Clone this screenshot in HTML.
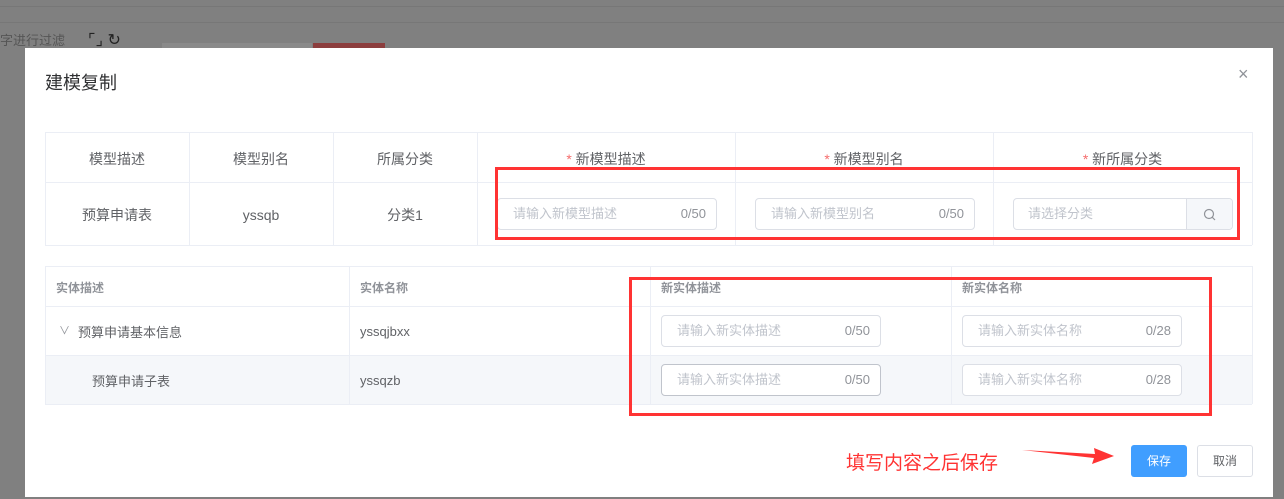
<!DOCTYPE html>
<html><head><meta charset="utf-8"><style>
*{box-sizing:border-box;margin:0;padding:0}
body{width:1284px;height:499px;background:#808080;font-family:"Liberation Sans","Noto Sans CJK SC",sans-serif;position:relative;overflow:hidden;color:#606266}
.a{position:absolute}
.modal{left:25px;top:48px;width:1248px;height:449px;background:#fff}
.ln{position:absolute;background:#ebeef5}
.t{position:absolute;font-size:14px;color:#606266;text-align:center;white-space:nowrap}
.inp{position:absolute;height:32px;border:1px solid #dcdfe6;border-radius:4px;background:#fff;font-size:13px;color:#c0c4cc;padding-left:15px;line-height:30px}
.inp span{position:absolute;right:10px;top:0;color:#909399}
.red{position:absolute;border:3px solid #f33}
.h2{position:absolute;font-size:12px;font-weight:bold;color:#909399}
.c2{position:absolute;font-size:13px;color:#606266}
</style></head><body>
<div class="a" style="left:0;top:6px;width:1284px;height:1px;background:#777"></div>
<div class="a" style="left:0;top:22px;width:1284px;height:1px;background:#777"></div>
<div class="a" style="left:0;top:30px;font-size:13px;color:#555">字进行过滤</div>
<div class="a" style="left:88px;top:30px;font-size:16px;color:#222">⌜⌟ ↻</div>
<div class="a" style="left:162px;top:43px;width:150px;height:6px;background:#8a8a8a"></div>
<div class="a" style="left:313px;top:43px;width:72px;height:6px;background:#8c3e3e"></div>

<div class="a modal"></div>
<div class="a" style="left:45px;top:69px;font-size:18px;color:#303133">建模复制</div>
<div class="a" style="left:1238px;top:64px;font-size:18px;color:#909399">×</div>

<div class="ln" style="left:45px;top:132px;width:1207px;height:1px"></div>
<div class="ln" style="left:45px;top:182px;width:1207px;height:1px"></div>
<div class="ln" style="left:45px;top:245px;width:1207px;height:1px"></div>
<div class="ln" style="left:45px;top:132px;width:1px;height:113px"></div>
<div class="ln" style="left:189px;top:132px;width:1px;height:113px"></div>
<div class="ln" style="left:333px;top:132px;width:1px;height:113px"></div>
<div class="ln" style="left:477px;top:132px;width:1px;height:113px"></div>
<div class="ln" style="left:735px;top:132px;width:1px;height:113px"></div>
<div class="ln" style="left:993px;top:132px;width:1px;height:113px"></div>
<div class="ln" style="left:1252px;top:132px;width:1px;height:113px"></div>
<div class="t" style="left:45px;top:149px;width:144px">模型描述</div>
<div class="t" style="left:189px;top:149px;width:144px">模型别名</div>
<div class="t" style="left:333px;top:149px;width:144px">所属分类</div>
<div class="t" style="left:477px;top:149px;width:258px"><b style="color:#f56c6c;font-weight:normal">*</b> 新模型描述</div>
<div class="t" style="left:735px;top:149px;width:258px"><b style="color:#f56c6c;font-weight:normal">*</b> 新模型别名</div>
<div class="t" style="left:993px;top:149px;width:259px"><b style="color:#f56c6c;font-weight:normal">*</b> 新所属分类</div>
<div class="t" style="left:45px;top:205px;width:144px">预算申请表</div>
<div class="t" style="left:189px;top:207px;width:144px">yssqb</div>
<div class="t" style="left:333px;top:205px;width:144px">分类1</div>
<div class="inp" style="left:497px;top:198px;width:220px">请输入新模型描述<span>0/50</span></div>
<div class="inp" style="left:755px;top:198px;width:220px">请输入新模型别名<span>0/50</span></div>
<div class="inp" style="left:1013px;top:198px;width:220px;padding-left:14px">请选择分类</div>
<div class="a" style="left:1186px;top:199px;width:46px;height:30px;background:#f5f7fa;border-left:1px solid #dcdfe6;border-radius:0 4px 4px 0"></div>
<svg class="a" style="left:1203px;top:208px" width="13" height="13" viewBox="0 0 13 13"><circle cx="6" cy="6" r="4.5" fill="none" stroke="#909399" stroke-width="1.2"/><path d="M9.3 9.3L12 12" stroke="#909399" stroke-width="1.2"/></svg>
<div class="red" style="left:495px;top:167px;width:745px;height:73px"></div>

<div class="a" style="left:45px;top:355px;width:1207px;height:49px;background:#f5f7fa"></div>
<div class="ln" style="left:45px;top:266px;width:1207px;height:1px"></div>
<div class="ln" style="left:45px;top:306px;width:1207px;height:1px"></div>
<div class="ln" style="left:45px;top:355px;width:1207px;height:1px"></div>
<div class="ln" style="left:45px;top:404px;width:1207px;height:1px"></div>
<div class="ln" style="left:45px;top:266px;width:1px;height:138px"></div>
<div class="ln" style="left:349px;top:266px;width:1px;height:138px"></div>
<div class="ln" style="left:650px;top:266px;width:1px;height:138px"></div>
<div class="ln" style="left:951px;top:266px;width:1px;height:138px"></div>
<div class="ln" style="left:1252px;top:266px;width:1px;height:138px"></div>
<div class="h2" style="left:56px;top:279px">实体描述</div>
<div class="h2" style="left:360px;top:279px">实体名称</div>
<div class="h2" style="left:661px;top:279px">新实体描述</div>
<div class="h2" style="left:962px;top:279px">新实体名称</div>
<div class="c2" style="left:59px;top:322px;font-size:11px;color:#909399">∨</div>
<div class="c2" style="left:78px;top:322px">预算申请基本信息</div>
<div class="c2" style="left:360px;top:324px">yssqjbxx</div>
<div class="c2" style="left:92px;top:371px">预算申请子表</div>
<div class="c2" style="left:360px;top:373px">yssqzb</div>
<div class="inp" style="left:661px;top:315px;width:220px">请输入新实体描述<span>0/50</span></div>
<div class="inp" style="left:962px;top:315px;width:220px">请输入新实体名称<span>0/28</span></div>
<div class="inp" style="left:661px;top:364px;width:220px;border-color:#c0c4cc">请输入新实体描述<span>0/50</span></div>
<div class="inp" style="left:962px;top:364px;width:220px">请输入新实体名称<span>0/28</span></div>
<div class="red" style="left:629px;top:277px;width:583px;height:139px"></div>

<div class="a" style="left:846px;top:448px;font-size:19px;color:#f33">填写内容之后保存</div>
<svg class="a" style="left:1020px;top:444px" width="96" height="22"><path d="M2 6 L75 10 L74 4 L94 12 L72 20 L74 14 Z" fill="#f33"/></svg>
<div class="a" style="left:1131px;top:445px;width:56px;height:32px;background:#409eff;border-radius:3px;color:#fff;font-size:12px;line-height:32px;text-align:center">保存</div>
<div class="a" style="left:1197px;top:445px;width:56px;height:32px;border:1px solid #dcdfe6;border-radius:3px;color:#606266;font-size:12px;line-height:30px;text-align:center">取消</div>
</body></html>
